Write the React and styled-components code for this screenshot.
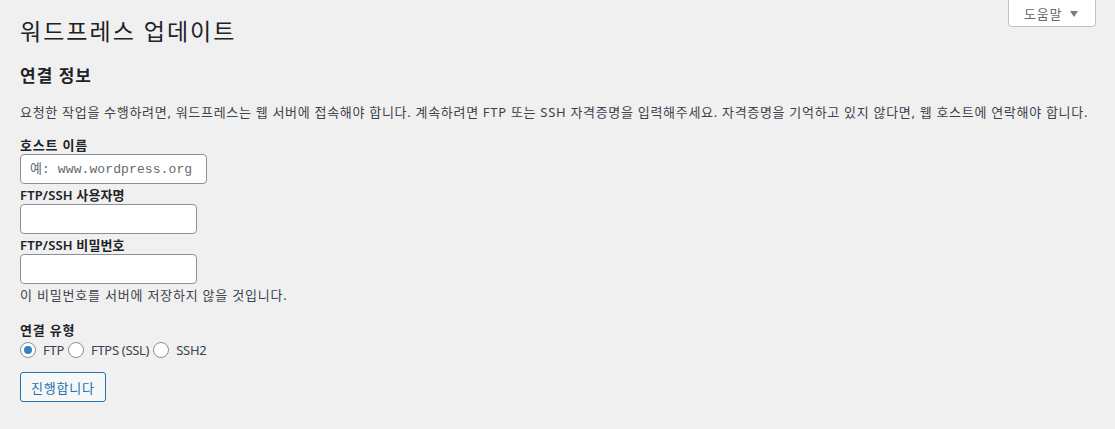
import React from "react";
import styled, { createGlobalStyle } from "styled-components";

const Global = createGlobalStyle`
  html, body { margin: 0; padding: 0; background: #f0f0f1; }
  body {
    font-family: "Noto Sans", "Noto Sans CJK KR", sans-serif;
    font-size: 13px;
    color: #3c434a;
  }
  * { box-sizing: border-box; }
`;

const Page = styled.div`
  padding: 0 19px 0 20px;
  display: flex;
  flex-direction: column;
  min-height: 429px;
`;

const TopRow = styled.div`
  display: flex;
  justify-content: space-between;
  align-items: flex-start;
`;

const Title = styled.h1`
  margin: 16px 0 0;
  font-size: 23px;
  font-weight: 400;
  line-height: 30px;
  letter-spacing: 2px;
  color: #1d2327;
`;

const HelpTab = styled.button`
  display: flex;
  align-items: center;
  gap: 8px;
  height: 27px;
  width: 88px;
  padding: 0 0 0 15px;
  background: #fff;
  border: 1px solid #c3c4c7;
  border-top: none;
  border-radius: 0 0 4px 4px;
  font: inherit;
  font-size: 13px;
  letter-spacing: 0.8px;
  color: #646970;
  cursor: pointer;
`;

const Arrow = styled.span`
  width: 0;
  height: 0;
  border-left: 4.5px solid transparent;
  border-right: 4.5px solid transparent;
  border-top: 6px solid #787c82;
  margin-top: 1px;
`;

const Section = styled.h2`
  margin: 19px 0 0;
  font-size: 17px;
  font-weight: 600;
  line-height: 22px;
  letter-spacing: 1px;
  color: #1d2327;
`;

const Para = styled.p`
  margin: 15px 0 0;
  line-height: 20px;
  letter-spacing: 0.7px;
  white-space: nowrap;
`;

const Field = styled.div`
  display: flex;
  flex-direction: column;
  align-items: flex-start;
  margin-top: ${(p) => p.$top}px;
`;

const Label = styled.label`
  font-weight: 600;
  line-height: 18px;
  letter-spacing: ${(p) => (p.$latin ? "0.15px" : "0.8px")};
  color: #1d2327;
`;

const TextInput = styled.input`
  width: ${(p) => p.$w}px;
  height: 30px;
  padding: 0 8px 0 ${(p) => (p.$code ? 9 : 8)}px;
  border: 1px solid #8c8f94;
  border-radius: 4px;
  background: #fff;
  font-family: ${(p) => (p.$code ? '"Liberation Mono", "Noto Sans CJK KR", monospace' : "inherit")};
  font-size: 13px;
  letter-spacing: ${(p) => (p.$code ? "0.1px" : "normal")};
  color: #2c3338;
  &::placeholder { color: #646970; }
`;

const Note = styled.p`
  margin: 1px 0 0;
  line-height: 20px;
  letter-spacing: 0.8px;
`;

const RadioRow = styled.div`
  display: flex;
  align-items: center;
  gap: 4px;
  height: 22px;
`;

const RadioLabel = styled.label`
  display: inline-flex;
  align-items: center;
  gap: 7px;
  line-height: 22px;
  letter-spacing: -0.3px;
  color: #3c434a;
`;

const Radio = styled.span`
  width: 16px;
  height: 16px;
  border-radius: 50%;
  border: 1px solid #8c8f94;
  background: #fff;
  display: inline-flex;
  align-items: center;
  justify-content: center;
  &::after {
    content: "";
    width: 8px;
    height: 8px;
    border-radius: 50%;
    background: ${(p) => (p.$checked ? "#3582c4" : "transparent")};
  }
`;

const Button = styled.button`
  align-self: flex-start;
  margin-top: 11px;
  height: 30px;
  padding: 0 10px;
  border: 1px solid #2271b1;
  border-radius: 3px;
  background: #f6f7f7;
  color: #2271b1;
  font: inherit;
  font-size: 13px;
  letter-spacing: 0.8px;
  cursor: pointer;
`;

export default function App() {
  return (
    <>
      <Global />
      <Page>
        <TopRow>
          <Title>워드프레스 업데이트</Title>
          <HelpTab>
            도움말 <Arrow />
          </HelpTab>
        </TopRow>
        <Section>연결 정보</Section>
        <Para>
          요청한 작업을 수행하려면, 워드프레스는 웹 서버에 접속해야 합니다. 계속하려면 FTP 또는 SSH 자격증명을 입력해주세요. 자격증명을 기억하고 있지 않다면, 웹 호스트에 연락해야 합니다.
        </Para>
        <Field $top={14}>
          <Label>호스트 이름</Label>
          <TextInput $w={187} $code placeholder="예: www.wordpress.org" />
        </Field>
        <Field $top={2}>
          <Label $latin>FTP/SSH 사용자명</Label>
          <TextInput $w={177} />
        </Field>
        <Field $top={2}>
          <Label $latin>FTP/SSH 비밀번호</Label>
          <TextInput $w={177} type="password" />
        </Field>
        <Note>이 비밀번호를 서버에 저장하지 않을 것입니다.</Note>
        <Field $top={16}>
          <Label>연결 유형</Label>
          <RadioRow>
            <RadioLabel>
              <Radio $checked />
              FTP
            </RadioLabel>
            <RadioLabel>
              <Radio />
              FTPS (SSL)
            </RadioLabel>
            <RadioLabel>
              <Radio />
              SSH2
            </RadioLabel>
          </RadioRow>
        </Field>
        <Button>진행합니다</Button>
      </Page>
    </>
  );
}
